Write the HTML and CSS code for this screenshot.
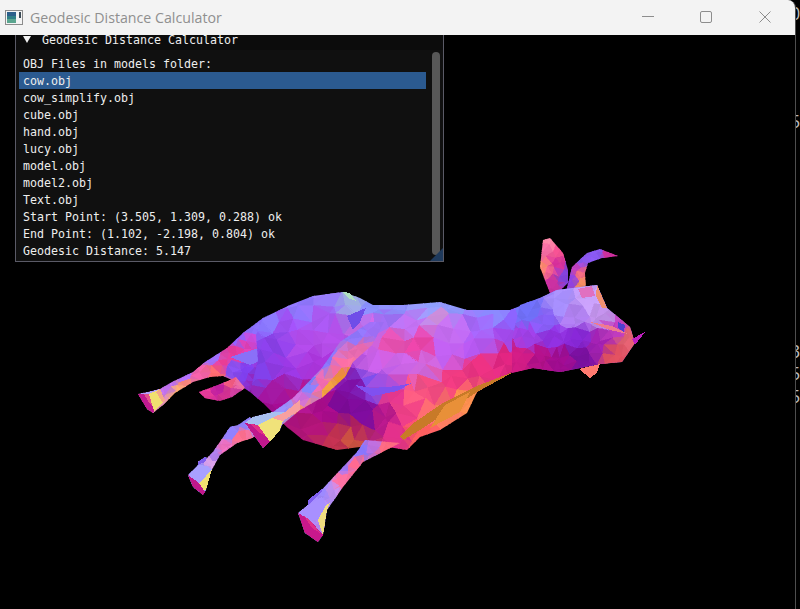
FILE: index.html
```html
<!DOCTYPE html>
<html lang="en">
<head>
<meta charset="utf-8">
<title>Geodesic Distance Calculator</title>
<link rel="stylesheet" href="styles.css">
</head>
<body>
<div class="window">
  <header class="titlebar">
    <svg class="appicon" width="18" height="15" viewBox="0 0 18 15">
      <rect x="0.5" y="0.5" width="17" height="14" fill="#f4f4f4" stroke="#8c8c8c"/>
      <rect x="2" y="2" width="9" height="11" fill="#2f7f86"/>
      <rect x="2" y="2" width="9" height="4" fill="#2c5f8a"/>
      <rect x="2" y="9" width="9" height="4" fill="#5aa58f"/>
      <rect x="14" y="2" width="2" height="6" fill="#3a4a55"/>
    </svg>
    <span class="wintitle">Geodesic Distance Calculator</span>
    <div class="caption">
      <svg class="capbtn" width="12" height="12" viewBox="0 0 12 12"><path d="M0 5.5H12" stroke="#8d8d8d" fill="none"/></svg>
      <svg class="capbtn capmax" width="12" height="12" viewBox="0 0 12 12"><rect x="0.5" y="0.5" width="11" height="11" rx="1.5" stroke="#8d8d8d" fill="none"/></svg>
      <svg class="capbtn" width="12" height="12" viewBox="0 0 12 12"><path d="M0.5 0.5L11.5 11.5M11.5 0.5L0.5 11.5" stroke="#8d8d8d" fill="none"/></svg>
    </div>
  </header>
  <main class="viewport">
    <svg id="scene" class="scene" width="795" height="574" viewBox="0 35 795 574" shape-rendering="crispEdges"></svg>
    <section class="panel">
      <div class="panel-title"><span class="arrow"></span><span>Geodesic Distance Calculator</span></div>
      <div class="panel-body">
        <ul class="rows">
          <li>OBJ Files in models folder:</li>
          <li class="selected">cow.obj</li>
          <li>cow_simplify.obj</li>
          <li>cube.obj</li>
          <li>hand.obj</li>
          <li>lucy.obj</li>
          <li>model.obj</li>
          <li>model2.obj</li>
          <li>Text.obj</li>
          <li>Start Point: (3.505, 1.309, 0.288) ok</li>
          <li>End Point: (1.102, -2.198, 0.804) ok</li>
          <li>Geodesic Distance: 5.147</li>
        </ul>
        <div class="scrollbar"></div>
      </div>
      <svg class="grip" width="13" height="13" viewBox="0 0 13 13"><polygon points="13,0 13,13 0,13" fill="#1f3a5c"/></svg>
    </section>
  </main>
</div>
<aside class="desktop">
  <span class="frag f0">0</span>
  <span class="frag f1">5</span>
  <span class="frag f2">3</span>
  <span class="frag f3">5</span>
  <span class="frag f4">5</span>
</aside>
<script src="cow.js"></script>
</body>
</html>
```
FILE: styles.css
```css
* { box-sizing: border-box; }
html, body { margin: 0; padding: 0; height: 100%; background: #000; overflow: hidden; }
body { display: flex; width: 800px; height: 609px; }
.window {
  width: 796px; height: 609px; flex: none; display: flex; flex-direction: column;
  border-right: 1px solid #4e4e4e; border-top-right-radius: 8px; overflow: hidden;
}
.titlebar {
  height: 35px; flex: none; background: #f3f3f3; display: flex; align-items: center;
  padding-left: 5px; padding-bottom: 1px;
}
.appicon { flex: none; margin-right: 7px; }
.wintitle { font: 14.2px "Open Sans", "Noto Sans", sans-serif; color: #8f8f8f; white-space: nowrap; }
.caption { margin-left: auto; display: flex; align-items: center; gap: 46px; padding-right: 24px; }
.capbtn { display: block; }
.capmax { margin-right: 1px; }
.viewport { position: relative; flex: 1; background: #000; }
.scene { display: block; }
.panel {
  position: absolute; left: 15px; top: 0; width: 429px; height: 227px;
  border: 1px solid #5a5a66; border-top: 0; background: #0c0c0c;
  font: 11.63px/17px "DejaVu Sans Mono", monospace; color: #eeeeee;
}
.panel-title { height: 15px; display: flex; align-items: flex-start; padding-left: 7px; line-height: 11px; }
.panel-title span:last-child { white-space: pre; }
.arrow {
  flex: none; width: 0; height: 0; margin: 1px 11px 0 0;
  border-left: 4px solid transparent; border-right: 4px solid transparent; border-top: 7px solid #f4f4f4;
}
.panel-body { position: relative; height: 211px; background: #101010; padding: 5px 17px 0 3px; }
.rows { list-style: none; margin: 0; padding: 0; }
.rows li { height: 17.04px; padding-left: 4px; white-space: pre; line-height: 18px; }
.rows .selected { background: #2b5a90; }
.scrollbar { position: absolute; right: 3px; top: 2px; width: 8px; height: 203px; border-radius: 4px; background: #585858; }
.grip { position: absolute; right: 0; bottom: 0; display: block; }
.desktop { position: relative; flex: 1; overflow: hidden; }
.frag { position: absolute; left: -6px; font: 18px/16px "Open Sans", sans-serif; color: #bcbcbc; }
.f0 { top: 5px; }
.f1 { top: 113px; }
.f2 { top: 343px; }
.f3 { top: 365px; }
.f4 { top: 388px; }
```
FILE: cow.js
```js
// Low-poly normal-shaded cow: each part is an outline filled with a jittered
// triangle mesh, coloured from sample points, then hand-placed sharp facets.
var NS = 'http://www.w3.org/2000/svg';
var svg = document.getElementById('scene');
var clipSeq = 0;

function hash(a, b) {
  var s = Math.sin(a * 127.1 + b * 311.7) * 43758.5453;
  return s - Math.floor(s);
}
function rgb(hex) {
  return [parseInt(hex.substr(1, 2), 16), parseInt(hex.substr(3, 2), 16), parseInt(hex.substr(5, 2), 16)];
}
function el(name, attrs, parent) {
  var e = document.createElementNS(NS, name);
  for (var k in attrs) e.setAttribute(k, attrs[k]);
  parent.appendChild(e);
  return e;
}
function sample(pts, x, y) {
  var r = 0, g = 0, b = 0, w = 0;
  for (var i = 0; i < pts.length; i++) {
    var dx = pts[i][0] - x, dy = pts[i][1] - y;
    var d = dx * dx + dy * dy + 4;
    var q = 1 / (d * d * d);
    var c = pts[i].rgb || (pts[i].rgb = rgb(pts[i][2]));
    r += c[0] * q; g += c[1] * q; b += c[2] * q; w += q;
  }
  return [r / w, g / w, b / w];
}
function part(p) {
  var xs = [], ys = [], i;
  for (i = 0; i < p.o.length; i += 2) { xs.push(p.o[i]); ys.push(p.o[i + 1]); }
  var minX = Math.min.apply(0, xs) - p.c, maxX = Math.max.apply(0, xs) + p.c;
  var minY = Math.min.apply(0, ys) - p.c, maxY = Math.max.apply(0, ys) + p.c;
  var id = 'clip' + (clipSeq++);
  var cp = el('clipPath', { id: id }, svg);
  el('polygon', { points: p.o.join(' ') }, cp);
  var g = el('g', { 'clip-path': 'url(#' + id + ')' }, svg);
  var rows = [], dy = p.c * 0.8, dx = p.c;
  for (var yi = 0; minY + yi * dy <= maxY + dy; yi++) {
    var row = [];
    for (var xi = 0; minX + xi * dx <= maxX + dx; xi++) {
      var j = p.c * 0.34;
      row.push([
        minX + xi * dx + (yi % 2 ? dx / 2 : 0) + (hash(xi, yi) - 0.5) * 2 * j,
        minY + yi * dy + (hash(yi + 40, xi + 9) - 0.5) * 2 * j
      ]);
    }
    rows.push(row);
  }
  function tri(a, b, c) {
    var cx = (a[0] + b[0] + c[0]) / 3, cy = (a[1] + b[1] + c[1]) / 3;
    var col = sample(p.s, cx, cy);
    var n = 1 + (hash(cx, cy) - 0.5) * 0.07;
    var f = 'rgb(' + col.map(function (v) { return Math.min(255, Math.round(v * n)); }).join(',') + ')';
    el('polygon', { fill: f, stroke: f, 'stroke-width': 0.6, points: [a, b, c].map(function (q) { return q[0].toFixed(1) + ',' + q[1].toFixed(1); }).join(' ') }, g);
  }
  for (var y = 0; y < rows.length - 1; y++) {
    for (var x = 0; x < rows[y].length - 1; x++) {
      var a = rows[y][x], b = rows[y][x + 1];
      if (y % 2) {
        var c = rows[y + 1][x + 1], d = rows[y + 1][x];
        tri(a, b, c); tri(a, c, d);
      } else {
        var e = rows[y + 1][x], h = rows[y + 1][x + 1];
        tri(a, b, e); tri(b, h, e);
      }
    }
  }
  (p.f || []).forEach(function (f) {
    el('polygon', { fill: f[0], points: f[1] }, svg);
  });
}

var parts = [
  { // far hind leg
    c: 8,
    o: [138,394,148,392,160,389,172,382,193,372,205,362,227,348,243,333,263,318,290,330,262,370,250,392,232,380,223,376,210,377,193,382,175,393,163,405,153,413,147,409],
    s: [[170,385,'#c070f0'],[185,376,'#b070ff'],[200,377,'#f060a8'],[186,384,'#ff8a80'],[178,391,'#ffb070'],[215,358,'#a070ff'],[222,364,'#f03e98'],[238,340,'#9060ff'],[245,346,'#e040b8'],[234,352,'#e83a9c'],[215,374,'#ff6a70'],[255,328,'#8a70ff'],[255,340,'#c848d8'],[245,374,'#8040f0'],[232,370,'#8a50f0'],[255,382,'#9028c0']],
    f: [
      ['#8a70f8','230,357 262,347 263,360 250,365'],
      ['#b4a0ff','138,394 148,392 160,389 156,392 149,394'],
      ['#c01a90','138,394 149,394 155,409 153,413 147,409'],
      ['#e4528c','144,394 149,394 154,408 150,404'],
      ['#f0e070','149,394 158,390 163,402 154,411'],
      ['#f4a888','156,392 160,389 165,400 163,403']
    ]
  },
  { // small stub
    c: 6,
    o: [199,392,218,385,230,380,236,377,245,388,232,397,220,401,205,398],
    s: [[205,394,'#e83a9a'],[220,390,'#c020a0'],[225,396,'#d03090'],[230,383,'#f05a80'],[240,385,'#f070a8'],[236,392,'#d040a0']]
  },
  { // leg behind
    c: 7,
    o: [188,475,198,465,198,462,205,457,207,458,213,452,230,427,238,425,250,417,262,432,252,438,237,443,220,455,210,473,206,490,203,495,193,487],
    s: [[200,470,'#a090ff'],[215,455,'#b080f0'],[232,432,'#9080ff'],[245,422,'#9080ff'],[225,450,'#f070c0'],[240,437,'#ff7090'],[212,462,'#d8a0e8']],
    f: [
      ['#a8a0ff','188,475 198,465 207,466 212,469 206,476 199,483'],
      ['#f0e070','206,476 212,469 206,490 203,490 199,483'],
      ['#c0188c','188,475 199,483 205,492 203,495 193,487'],
      ['#8060f0','198,465 198,462 205,457 207,458 205,462']
    ]
  },
  { // ear
    c: 8,
    o: [543,240,550,238,563,253,568,270,568,283,552,298,546,283,540,267],
    s: [[545,250,'#f06aa0'],[543,268,'#ff8a70'],[552,285,'#c830a0'],[557,265,'#d8309c'],[565,276,'#8040d8'],[548,243,'#ff88a8'],[558,252,'#f05090'],[548,270,'#f06090']]
  },
  { // horn
    c: 6,
    o: [566,292,572,267,587,253,600,249,618,256,602,258,588,263,585,273,586,292],
    s: [[580,260,'#8a58f0'],[595,254,'#8858f0'],[610,255,'#d030a0'],[571,280,'#9040e0'],[581,275,'#f06a80'],[583,283,'#f08a60'],[577,268,'#c040c0']]
  },
  { // body and neck
    c: 15,
    o: [250,392,258,360,256,335,263,318,290,305,313,296,343,292,360,298,373,305,403,305,440,302,467,310,510,310,540,298,557,290,597,285,607,308,630,327,635,343,622,362,600,364,560,372,533,368,510,373,477,392,467,413,440,430,420,437,407,450,375,445,337,450,303,440,287,427,263,403],
    s: [
      [270,322,'#8a78ff'],[298,306,'#9078ff'],[330,297,'#9a80ff'],[350,295,'#a0b0e0'],[375,308,'#8a90ff'],[400,308,'#9090ff'],[430,305,'#90a0ff'],
      [285,325,'#a050f4'],[320,318,'#a858f0'],[275,345,'#8a40e8'],[300,345,'#b04ae8'],[330,340,'#b44ee8'],[285,370,'#9a38e4'],[320,365,'#a834d8'],[262,372,'#8040e8'],
      [275,388,'#a018a0'],[300,400,'#b01590'],[325,410,'#a80c8a'],[275,410,'#a00c90'],[310,425,'#b01478'],[335,443,'#c03050'],[352,441,'#c85040'],[355,428,'#b02060'],[345,405,'#7c0a98'],[365,415,'#800ca0'],[355,388,'#8010a8'],
      [385,420,'#b8188c'],[400,432,'#e03088'],[408,410,'#f04088'],[412,398,'#ff5c80'],[430,415,'#ff6a70'],[450,415,'#ff8060'],[465,400,'#ff9050'],[420,435,'#ff6060'],
      [375,365,'#c860e8'],[400,362,'#cc66e8'],[425,368,'#d068e0'],[365,385,'#8050f0'],[385,382,'#a050e0'],[395,395,'#e83890'],[420,345,'#ea44a8'],[395,345,'#e850b0'],[375,330,'#d068e8'],[410,325,'#c070f0'],[385,320,'#a070f8'],
      [450,307,'#8f98ff'],[490,313,'#8a88ff'],[525,306,'#7878ff'],[440,314,'#d090e0'],[450,330,'#c46cf0'],[480,328,'#a466f8'],[515,324,'#8a60f8'],[445,352,'#c060f0'],[480,346,'#b458f0'],[510,338,'#a048e8'],
      [432,385,'#f04a80'],[455,382,'#ee3a80'],[482,368,'#e83080'],[507,356,'#e02480']
    ],
    f: [
      ['#8050f0','355,385 362,390 372,396 397,391 412,383 398,386 372,388'],
      ['#c87a28','513,372 477,386 443,403 412,424 400,436 403,440 420,430 450,410 477,392 510,374'],
      ['#e89038','445,405 470,392 460,412 430,428'],
      ['#6f4de8','347,316 366,308 360,322 353,330'],
      ['#b0e0c0','343,292 350,293 356,301 348,298']
    ]
  },
  { // head
    c: 10,
    o: [520,305,540,298,557,290,597,285,607,308,630,327,635,343,622,362,600,364,560,372,533,368,512,373,512,340],
    s: [
      [530,312,'#7070f8'],[560,305,'#a890ff'],[590,302,'#c8a0f8'],[602,316,'#c090e8'],[545,322,'#8860f8'],[575,318,'#b080f0'],
      [530,338,'#a040e8'],[552,338,'#9030e0'],[578,338,'#8828d8'],[600,345,'#a020b0'],
      [615,330,'#c03cc0'],[628,340,'#e06070'],[615,356,'#e05060'],[520,358,'#d01c84'],[540,358,'#b01088'],[560,362,'#a00c90'],[582,356,'#7a10a0']
    ],
    f: [
      ['#5040d0','618,322 625,325 624,332 618,328'],
      ['#f09070','597,285 607,308 602,308 596,296'],
      ['#e070c0','578,289 592,286 595,296 582,298'],
      ['#f07a90','590,322 612,326 628,334 610,330'],
      ['#c020c0','632,339 645,332 635,345'],
      ['#ff7a70','579,369 600,364 597,373 590,378']
    ]
  },
  { // near front leg
    c: 10,
    o: [245,423,253,417,273,412,293,398,322,368,340,342,370,322,384,322,372,345,353,362,345,377,323,397,300,410,282,425,280,430,263,448],
    s: [[285,408,'#9a90ff'],[310,385,'#8080ff'],[330,360,'#8a78ff'],[355,335,'#9078ff'],[372,328,'#a070f8'],[300,400,'#d070e0'],[320,385,'#f06ab0'],[340,365,'#ff70a8'],[360,350,'#e86ab0'],[300,408,'#f09070'],[330,392,'#f0a040'],[345,378,'#e89030']],
    f: [
      ['#c0188c','245,423 258,425 272,440 263,448'],
      ['#e03088','250,424 258,425 266,436 258,432'],
      ['#f0e27a','258,425 272,418 283,421 280,430 270,442'],
      ['#a8c0f0','245,423 253,417 273,412 285,412 272,418 258,425'],
      ['#f8a0a0','272,418 285,412 300,400 300,410 283,421']
    ]
  },
  { // lower leg
    c: 8,
    o: [298,513,308,505,328,483,343,467,357,452,365,440,400,443,363,462,343,487,327,510,323,535,318,542,305,533],
    s: [[325,490,'#9a88ff'],[345,465,'#a078f8'],[360,450,'#8a78ff'],[375,445,'#c070e0'],[342,482,'#ff70a0'],[355,465,'#ff6a90'],[385,448,'#ff6a80'],[330,490,'#c090f0']],
    f: [
      ['#8060f0','308,505 308,500 322,489 322,492'],
      ['#a890ff','298,513 308,505 322,497 326,505 318,520 310,520'],
      ['#f0dc80','318,520 326,505 330,503 327,510 323,535'],
      ['#c8188c','298,513 310,520 323,535 318,542 305,533'],
      ['#e03088','304,516 310,520 320,533 312,528']
    ]
  }
];
parts.forEach(part);
```
